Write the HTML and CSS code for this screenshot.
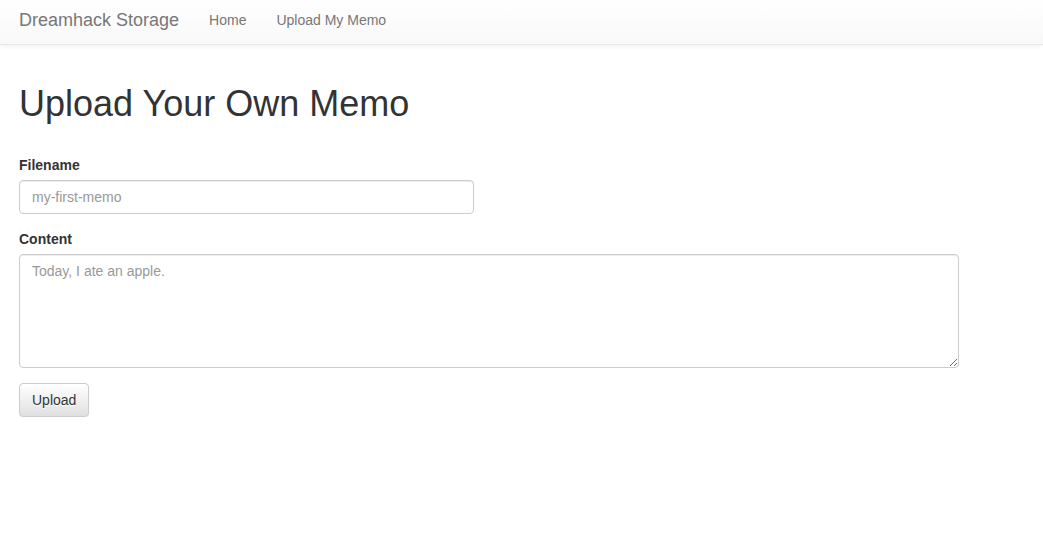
FILE: index.html
```html
<!DOCTYPE html>
<html>
<head>
<meta charset="utf-8">
<title>Dreamhack Storage</title>
<link rel="stylesheet" href="styles.css">
</head>
<body>
<nav class="navbar">
  <div class="nav-inner">
    <a class="brand" href="#">Dreamhack Storage</a>
    <ul class="nav-links">
      <li><a href="#">Home</a></li>
      <li><a href="#">Upload My Memo</a></li>
    </ul>
  </div>
</nav>
<main class="container">
  <h1 class="title">Upload Your Own Memo</h1>
  <form class="memo-form">
    <div class="form-group">
      <label class="label" for="filename">Filename</label>
      <input class="control control-half" type="text" id="filename" placeholder="my-first-memo">
    </div>
    <div class="form-group">
      <label class="label" for="content">Content</label>
      <textarea class="control control-full" id="content" rows="5" placeholder="Today, I ate an apple."></textarea>
    </div>
    <button class="btn" type="button">Upload</button>
  </form>
</main>
</body>
</html>
```

FILE: styles.css
```css
* { box-sizing: border-box; }
html, body {
  margin: 0;
  padding: 0;
  background: #fff;
  font-family: "Liberation Sans", Arial, Helvetica, sans-serif;
  font-size: 14px;
  line-height: 20px;
  color: #333;
}
.navbar {
  height: 45px;
  background: linear-gradient(to bottom, #ffffff 0, #f8f8f8 100%);
  border-bottom: 1px solid #e7e7e7;
  box-shadow: inset 0 1px 0 rgba(255,255,255,.15), 0 1px 5px rgba(0,0,0,.075);
}
.nav-inner {
  display: flex;
  align-items: flex-start;
  padding-left: 4px;
}
.brand {
  display: block;
  padding: 10px 15px 14px;
  font-size: 18px;
  line-height: 20px;
  color: #777;
  text-decoration: none;
  text-shadow: 0 1px 0 rgba(255,255,255,.25);
}
.nav-links {
  display: flex;
  list-style: none;
  margin: 0;
  padding: 0;
}
.nav-links a {
  display: block;
  padding: 10px 15px 14px;
  line-height: 20px;
  font-size: 14px;
  color: #777;
  text-decoration: none;
  text-shadow: 0 1px 0 rgba(255,255,255,.25);
}
.container {
  padding: 0 19px;
}
.title {
  margin: 39px 0 31px;
  font-size: 36px;
  font-weight: 500;
  line-height: 39.6px;
  color: #333;
}
.form-group {
  margin-bottom: 15px;
}
.label {
  display: block;
  margin-bottom: 5px;
  font-weight: bold;
  font-size: 14px;
  line-height: 20px;
}
.control {
  display: block;
  padding: 6px 12px;
  font-family: inherit;
  font-size: 14px;
  line-height: 20px;
  color: #555;
  background: #fff;
  border: 1px solid #ccc;
  border-radius: 4px;
  box-shadow: inset 0 1px 1px rgba(0,0,0,.075);
  margin: 0;
}
.control::placeholder { color: #999; }
.control-half {
  width: 455px;
  height: 34px;
}
.control-full {
  width: 940px;
  height: 114px;
  resize: vertical;
}
.btn {
  display: inline-block;
  padding: 6px 12px;
  height: 34px;
  font-family: inherit;
  font-size: 14px;
  line-height: 20px;
  color: #333;
  background: linear-gradient(to bottom, #ffffff 0, #e0e0e0 100%);
  border: 1px solid #ccc;
  border-radius: 4px;
  text-shadow: 0 1px 0 #fff;
  box-shadow: inset 0 1px 0 rgba(255,255,255,.15), 0 1px 1px rgba(0,0,0,.075);
  cursor: pointer;
}
```
